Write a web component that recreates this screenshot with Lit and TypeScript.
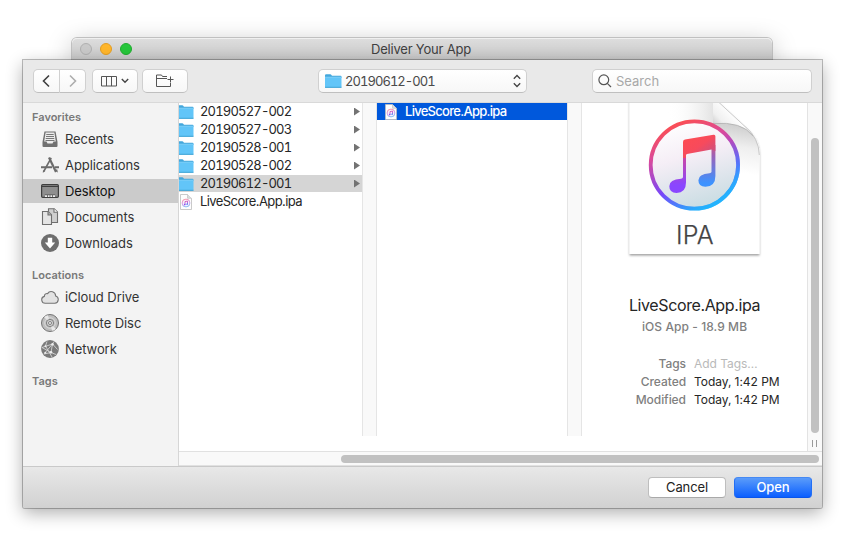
import { LitElement, html, css, svg, nothing } from "lit";
import { customElement, property } from "lit/decorators.js";
import { classMap } from "lit/directives/class-map.js";

const sidebarIcons: Record<string, unknown> = {
  recents: svg`
    <path d="M3.500 1.500h11l2 10.500v4q0 1-1 1H2.500q-1 0-1-1v-4z" fill="#707070"/>
    <path d="M4.600 2.500h8.800l1.400 9h-2.300l-1 2h-5l-1-2H3.200z" fill="#ececec"/>
    <path d="M5.300 4.500h7.400M5 6.500h8M4.700 8.500h8.600M4.500 10.500h9" stroke="#777" stroke-width="1" fill="none"/>`,
  applications: svg`
    <g fill="none" stroke="#6b6b6b">
      <path d="M8 1.500 15 16" stroke-width="2.200"/>
      <path d="M10.200 1.800 3 15" stroke-width="1.600"/>
      <path d="M0 11.300H11M14 11.300h4" stroke-width="2"/>
    </g>
    <path d="m2 14 2.300 1.200-2.500 1.600zM14 14l2.200-.8.700 3.500z" fill="#6b6b6b"/>`,
  desktop: svg`
    <rect x=".6" y="2.600" width="16.800" height="12.800" rx="1.200" fill="#8f8f8f" stroke="#3f3f3f" stroke-width="1.200"/>
    <path d="M1 4.500h16" stroke="#3f3f3f"/>
    <path d="M4 15v-2h10v2z" fill="#eee"/>
    <path d="M6.500 13v2M9 13v2M11.500 13v2M3.800 12.800h10.400" stroke="#555" stroke-width=".8"/>`,
  documents: svg`
    <g stroke="#6f6f6f" stroke-width="1.100" fill="#e4e4e4">
      <path d="M7.500.8h5.700l3.300 3.300v10.400h-9z" fill="#cfcfcf"/>
      <path d="M13 .8v3.400h3.500" fill="#fff"/>
      <path d="M1.500 3.500h5.700l3.300 3.300v9.700h-9z"/>
      <path d="M7 3.500v3.500h3.500" fill="#aaa"/>
    </g>`,
  downloads: svg`
    <circle cx="9" cy="9" r="9" fill="#6e6e6e"/>
    <path d="M6.800 3.800h4.400v4.700h3L9 14.500 3.800 8.500h3z" fill="#fff"/>`,
  icloud: svg`
    <path d="M4.300 15.300a3.500 3.500 0 0 1-.9-6.900 2.600 2.600 0 0 1 3.200-2.800 4.300 4.300 0 0 1 8 2.300 3.800 3.800 0 0 1-.8 7.400z"
      fill="#e2e2e2" stroke="#747474" stroke-width="1.100"/>`,
  disc: svg`
    <circle cx="9" cy="9" r="8.500" fill="#bdbdbd" stroke="#737373"/>
    <path d="M9 9 3 3A8.500 8.500 0 0 1 7 1.200zM9 9l6 6a8.500 8.500 0 0 1-4 1.800z" fill="#e9e9e9"/>
    <circle cx="9" cy="9" r="5.300" fill="none" stroke="#e2e2e2" stroke-width=".7"/>
    <circle cx="9" cy="9" r="3.600" fill="#d2d2d2" stroke="#777" stroke-width=".9"/>
    <circle cx="9" cy="9" r="1.500" fill="#f3f3f3" stroke="#777" stroke-width=".9"/>`,
  network: svg`
    <circle cx="9" cy="9" r="8.900" fill="#7a7a7a"/>
    <g fill="none" stroke="#d2d2d2" stroke-width=".9">
      <path d="M1 7.500 11.500 4 16.500 9.500M3 14l8.500-10M11.500 4 10 12.500l5 2M1 7.500l9 5L3 14M6 1.500 4.500 6l6.500 11M11.500 4 13 1.500"/>
    </g>
    <g fill="#eee"><circle cx="11.500" cy="4.200" r="1.200"/><circle cx="4.500" cy="6.300" r="1"/><circle cx="10" cy="12.300" r="1.300"/><circle cx="4.300" cy="12.800" r="1"/></g>`,
};

const folderIcon = html`<svg width="17" height="16" viewBox="0 0 17 16">
  <path d="M0 2.500Q0 1.300 1.200 1.300h4q.8 0 1.300.8l.4.600H15.500q1 0 1 1V5H0z" fill="#43a7dc"/>
  <path d="M0 4.300h16.500v9.700q0 .7-.7.7H.7q-.7 0-.7-.7z" fill="#62c5f8"/>
  <path d="M0 4.200h16.500" stroke="#8ad8fd" stroke-width=".8"/>
  <path d="M0 14.300h16.500" stroke="#3c9fd0" stroke-width=".9"/>
</svg>`;

const fileIcon = html`<svg width="12" height="16" viewBox="0 0 12 16">
  <defs><linearGradient id="m" gradientUnits="userSpaceOnUse" x1="5" y1="5" x2="7" y2="13"><stop stop-color="#ff5668"/><stop offset=".5" stop-color="#b25ae0"/><stop offset="1" stop-color="#2a9df4"/></linearGradient></defs>
  <path d="M.5.500h7l4 4v11H.5z" fill="#fdfdfd" stroke="#bcbcbc" stroke-width=".8"/>
  <path d="M7.500.500v3.800h4" fill="#ddd" stroke="#bbb" stroke-width=".6"/>
  <circle cx="6" cy="9" r="3.900" fill="#f8f2fb" stroke="url(#m)" stroke-width=".8" stroke-opacity=".75"/>
  <path d="M5 10.700V7.600l2.500-.5v3" fill="none" stroke="url(#m)" stroke-width=".9"/>
  <circle cx="4.700" cy="10.600" r=".8" fill="#8a4cf0"/><circle cx="7.100" cy="10.200" r=".8" fill="#3f86f5"/>
</svg>`;

@customElement("side-item")
class SideItem extends LitElement {
  @property() icon = "";
  @property() label = "";
  @property({ type: Boolean }) selected = false;
  static styles = css`
    :host { display: block; margin-bottom: 2px; }
    .item { height: 24px; display: flex; align-items: center; gap: 6px; padding-left: 18px; color: #333; letter-spacing: -.08px; }
    .selected { background: #cbcbcb; color: #111; }
    svg { flex: none; display: block; }
  `;
  render() {
    return html`<div class=${classMap({ item: true, selected: this.selected })}>
      <svg width="18" height="18" viewBox="0 0 18 18">${sidebarIcons[this.icon]}</svg><span>${this.label}</span>
    </div>`;
  }
}

@customElement("file-row")
class FileRow extends LitElement {
  @property() name = "";
  @property() kind = "folder";
  @property() tone = "";
  static styles = css`
    :host { display: block; margin-bottom: 1px; }
    .row { height: 17px; display: flex; align-items: center; color: #262626; }
    .icon { width: 21px; height: 16px; flex: none; overflow: hidden; }
    .icon svg { display: block; }
    .folder .icon svg { margin-left: -2px; }
    .file .icon svg { margin-left: 1px; }
    .name { flex: 1; line-height: 17px; white-space: nowrap; }
    .folder .name { font-variant-numeric: tabular-nums; letter-spacing: -.82px; }
    .file .name { letter-spacing: -.58px; }
    .arrow { width: 6px; height: 8px; margin-right: 2px; background: #737373; clip-path: polygon(0 0, 100% 50%, 0 100%); }
    .grey { background: #d5d5d5; }
    .blue { background: #0058dc; color: #fff; padding-left: 7px; font-weight: 500; }
    .blue .name { letter-spacing: -.72px; }
  `;
  render() {
    const folder = this.kind === "folder";
    return html`<div class=${classMap({ row: true, folder, file: !folder, grey: this.tone === "grey", blue: this.tone === "blue" })}>
      <span class="icon">${folder ? folderIcon : fileIcon}</span>
      <span class="name">${this.name}</span>
      ${folder ? html`<span class="arrow"></span>` : nothing}
    </div>`;
  }
}

@customElement("file-preview")
class FilePreview extends LitElement {
  static styles = css`
    :host { display: block; width: 225px; overflow: hidden; }
    .art { display: block; }
    .title { margin-top: 31px; height: 23px; line-height: 22px; font-size: 16px; letter-spacing: -.38px; text-align: center; color: #262626; }
    .sub { height: 20px; line-height: 20px; font-size: 12px; font-weight: 500; color: #808080; text-align: center; letter-spacing: .08px; }
    .facts { margin-top: 18px; display: grid; grid-template-columns: 104px 1fr; column-gap: 8px; grid-auto-rows: 18px; line-height: 18px; font-size: 12px; color: #262626; letter-spacing: -.05px; white-space: nowrap; }
    .key { text-align: right; color: #808080; font-weight: 500; }
    .hint { color: #b9b9b9; }
  `;
  render() {
    return html`
      <svg class="art" width="225" height="160" viewBox="582 103 225 160">
        <defs>
          <linearGradient id="ring" x1=".25" y1="0" x2=".65" y2="1">
            <stop offset="0" stop-color="#ff4f4b"/><stop offset=".3" stop-color="#d94a9c"/><stop offset=".68" stop-color="#7747fa"/><stop offset="1" stop-color="#20b6fc"/>
          </linearGradient>
          <linearGradient id="ringBlue" x1="0" y1=".5" x2="1" y2=".55">
            <stop offset=".35" stop-color="#20b6fc" stop-opacity="0"/><stop offset="1" stop-color="#22b4ff"/>
          </linearGradient>
          <linearGradient id="fadeDown" x1="0" y1="0" x2="0" y2="1">
            <stop offset=".25" stop-color="#000"/><stop offset=".8" stop-color="#fff"/>
          </linearGradient>
          <mask id="lower" maskUnits="userSpaceOnUse" x="640" y="115" width="110" height="100"><rect x="640" y="115" width="110" height="100" fill="url(#fadeDown)"/></mask>
          <linearGradient id="disc" x1=".3" y1="0" x2=".6" y2="1">
            <stop offset="0" stop-color="#fff"/><stop offset=".4" stop-color="#f5eef6"/><stop offset="1" stop-color="#c8dce2"/>
          </linearGradient>
          <linearGradient id="left" gradientUnits="userSpaceOnUse" x1="0" y1="140" x2="0" y2="185"><stop stop-color="#ff4a55"/><stop offset=".35" stop-color="#cf479f"/><stop offset="1" stop-color="#8a46ff"/></linearGradient>
          <linearGradient id="right" gradientUnits="userSpaceOnUse" x1="0" y1="138" x2="0" y2="183"><stop stop-color="#fa4f5d"/><stop offset=".4" stop-color="#9b62b8"/><stop offset="1" stop-color="#3d93ff"/></linearGradient>
          <linearGradient id="beam" x1="0" y1="0" x2="1" y2="1"><stop stop-color="#ff4c50"/><stop offset=".5" stop-color="#f74a5c"/><stop offset="1" stop-color="#b8538f"/></linearGradient>
          <linearGradient id="shade" x1="0" y1="0" x2="1" y2="0"><stop offset=".45" stop-color="#fff" stop-opacity="0"/><stop offset="1" stop-color="#dadada"/></linearGradient>
          <linearGradient id="curl" gradientUnits="userSpaceOnUse" x1="714" y1="126" x2="731" y2="110"><stop stop-color="#cdcdcd"/><stop offset=".4" stop-color="#f0f0f0"/><stop offset="1" stop-color="#fff"/></linearGradient>
          <linearGradient id="under" gradientUnits="userSpaceOnUse" x1="742" y1="126" x2="735" y2="172"><stop stop-color="#cfcfcf"/><stop offset=".45" stop-color="#efefef"/><stop offset="1" stop-color="#fff"/></linearGradient>
          <filter id="soft" x="-10%" y="-10%" width="120%" height="120%"><feDropShadow dx="0" dy="1.500" stdDeviation="1.300" flood-opacity=".38"/></filter>
        </defs>
        <path d="M629.500 90H706L745 126.500Q759.500 138 759.500 153V254H629.500z" fill="#fff" filter="url(#soft)"/>
        <path d="M630 103h83v32h-83z" fill="url(#shade)" opacity=".75"/>
        <path d="M713 123q28-2 34 5 12 10 12 28V175H713z" fill="url(#under)"/>
        <path d="M713 90V123.600Q742 121 752 135Q750 131 745 126.500L719 102.500V90z" fill="url(#curl)"/>
        <path d="M713 123.600Q742 121 753 136" fill="none" stroke="#a9a9a9" stroke-width=".7"/>
        <path d="M719 102.500 745 126.500Q759 138 759.300 155" fill="none" stroke="#bcbcbc" stroke-width=".8"/>
        <circle cx="694.400" cy="165" r="43.700" fill="url(#disc)"/>
        <circle cx="694.400" cy="165" r="43.700" fill="none" stroke="url(#ring)" stroke-width="3.800"/>
        <circle cx="694.400" cy="165" r="43.700" fill="none" stroke="url(#ringBlue)" stroke-width="3.800" mask="url(#lower)"/>
        <path d="M683 150v27.200q-.3 1.400-2 1.600-11.700.6-11.700 7.500 0 6.600 7.200 6.600 9.500 0 9.500-10.400V150z" fill="url(#left)"/>
        <path d="M711.500 145v27q-.2 1-2 1.300-11.100.8-11.100 7 0 6.500 7 6.500 10-.2 10-10.800V145z" fill="url(#right)"/>
        <path d="M683 158V142q0-2 2-2.400l28.500-4.900q1.900-.3 1.900 1.500V151l-3.900-1.500-24.500 4.400q-1 .2-1 1.400V158z" fill="url(#beam)"/>
        <text x="694.800" y="244" font-size="25" font-weight="300" text-anchor="middle" fill="#444" stroke="#444" stroke-width=".25" textLength="37.500">IPA</text>
      </svg>
      <div class="title">LiveScore.App.ipa</div>
      <div class="sub">iOS App - 18.9 MB</div>
      <div class="facts">
        <span class="key">Tags</span><span class="hint">Add Tags…</span>
        <span class="key">Created</span><span>Today, 1:42 PM</span>
        <span class="key">Modified</span><span>Today, 1:42 PM</span>
      </div>`;
  }
}

@customElement("app-root")
class AppRoot extends LitElement {
  static styles = css`
    :host { display: block; width: 845px; height: 535px; overflow: hidden; background: #fff; font: 13px/16px Inter, "Liberation Sans", sans-serif; color: #333; box-sizing: border-box; padding: 38px 22px 0; }
    * { box-sizing: border-box; }
    svg { display: block; }
    .window { height: 22px; margin: 0 51px 0 50px; border-radius: 5px 5px 0 0; background: linear-gradient(#dedede, #c7c7c7); box-shadow: 0 0 0 1px #c0c0c0, inset 0 1px #f0f0f0, 0 6px 26px rgba(0,0,0,.28); display: grid; grid-template-columns: 1fr auto 1fr; align-items: center; padding: 0 10px 0 8px; color: #404040; letter-spacing: -.2px; }
    .lights { display: flex; gap: 8px; }
    .light { width: 12px; height: 12px; border-radius: 50%; border: 1px solid #b0b0b0; background: #c9c9c9; }
    .light.min { background: #ffb62b; border-color: #e39d22; }
    .light.max { background: #26c63b; border-color: #1fac2e; }
    .dialog { position: relative; width: 799px; height: 448px; margin-left: 1px; display: flex; flex-direction: column; border-radius: 0 0 2px 2px; background: #e9e9e9; box-shadow: 0 0 0 1px rgba(0,0,0,.25), 0 5px 17px rgba(0,0,0,.32); }
    .toolbar { height: 43px; flex: none; display: flex; align-items: flex-start; padding: 9px 10px 0; border-bottom: 1px solid #d9d9d9; }
    .control { height: 24px; border: 1px solid #d0d0d0; border-bottom-color: #bfbfbf; border-radius: 5px; background: linear-gradient(#fff, #f7f7f7); display: flex; align-items: center; justify-content: center; }
    .back { width: 27px; border-radius: 5px 0 0 5px; padding-right: 1px; }
    .next { width: 26px; border-left: 0; border-radius: 0 5px 5px 0; margin-right: 6px; }
    .view { width: 46px; margin-right: 4px; gap: 3px; padding-right: 1px; }
    .new { width: 46px; margin-right: 130px; }
    .new svg { margin-top: -1px; }
    .path { width: 209px; margin-right: 65px; justify-content: flex-start; padding: 0 5px 0 6px; gap: 3px; font-size: 13px; color: #4a4a4a; }
    .path span { flex: 1; font-variant-numeric: tabular-nums; letter-spacing: -.98px; }
    .path span { letter-spacing: -.95px; }
    .search { width: 220px; justify-content: flex-start; padding-left: 5px; gap: 4px; color: #a8a8a8; }
    .body { flex: 1; display: flex; min-height: 0; }
    .side { width: 156px; background: #f3f3f3; border-right: 1px solid #d6d6d6; }
    .heading { height: 24px; line-height: 28px; padding-left: 9px; font-size: 11px; font-weight: 600; color: #797979; }
    .later { margin-top: 6px; }
    .browser { flex: 1; display: flex; flex-direction: column; background: #fff; }
    .panes { display: flex; height: 348px; }
    .col { height: 333px; overflow: hidden; }
    .first { width: 183px; }
    .second { width: 190px; }
    .gutter { width: 15px; height: 333px; background: #f9f9f9; border: solid #e5e5e5; border-width: 0 1px; }
    .vbar { width: 15px; border-left: 1px solid #e3e3e3; background: #f9f9f9; display: flex; flex-direction: column; align-items: center; padding: 35px 0 0; }
    .vthumb { width: 8px; height: 295px; border-radius: 4px; background: #c1c1c1; }
    .grip { width: 5px; height: 7px; margin: 7px 1px 0 0; border: solid #999; border-width: 0 1px; }
    .hbar { height: 15px; background: #f9f9f9; border: solid #e1e1e1; border-width: 1px 0; display: flex; align-items: center; justify-content: flex-end; padding-right: 3px; }
    .hthumb { width: 478px; height: 8px; border-radius: 4px; background: #c1c1c1; }
    .footer { height: 42px; flex: none; border-top: 1px solid #c9c9c9; border-radius: 0 0 2px 2px; background: linear-gradient(#e8e8e8, #d1d1d1); display: flex; justify-content: flex-end; gap: 8px; padding: 10px 10px 0 0; }
    .button { width: 78px; height: 21px; border-radius: 4px; border: 1px solid #bebebe; border-bottom-color: #a9a9a9; background: #fff; text-align: center; line-height: 19px; color: #222; letter-spacing: -.1px; }
    .open { color: #fff; font-weight: 500; background: linear-gradient(#5b9cfa, #0b5fff); border-color: #4689f3 #236ff5 #0a55ea; }
  `;
  render() {
    return html`
      <div class="window">
        <div class="lights"><span class="light"></span><span class="light min"></span><span class="light max"></span></div>
        <span>Deliver Your App</span>
      </div>
      <div class="dialog">
        <div class="toolbar">
          <div class="control back"><svg width="8" height="14" viewBox="0 0 8 14" fill="none" stroke="#3f3f3f" stroke-width="1.600"><path d="M7 1.500 1.500 7 7 12.500"/></svg></div>
          <div class="control next"><svg width="8" height="14" viewBox="0 0 8 14" fill="none" stroke="#adadad" stroke-width="1.600"><path d="M1 1.500 6.500 7 1 12.500"/></svg></div>
          <div class="control view">
            <svg width="17" height="11" viewBox="0 0 17 11" fill="none" stroke="#555"><path d="M.5.500h15v9.500H.5zM5.500.500V10M10.500.500V10"/></svg>
            <svg width="8" height="6" viewBox="0 0 8 6" fill="none" stroke="#444" stroke-width="1.400"><path d="M.8 1 4 4.200 7.200 1"/></svg>
          </div>
          <div class="control new"><svg width="18" height="14" viewBox="0 0 18 14" fill="none" stroke="#555"><path d="M11 2.500H6.500L5.500 1H.5v11.500h14V9M.5 4.500H11M14.500 2.500v6M11.500 5.500h6"/></svg></div>
          <div class="control path">${folderIcon}<span>20190612-001</span>
            <svg width="8" height="14" viewBox="0 0 8 14" fill="none" stroke="#444" stroke-width="1.300"><path d="M.8 4.800 4 1.500l3.200 3.300M.8 9.200 4 12.500l3.200-3.300"/></svg>
          </div>
          <div class="control search"><svg width="14" height="14" viewBox="0 0 14 14" fill="none" stroke="#555" stroke-width="1.200"><circle cx="5.800" cy="5.800" r="4.900"/><path d="M9.300 9.300 13 13"/></svg><span>Search</span></div>
        </div>
        <div class="body">
          <div class="side">
            <div class="heading">Favorites</div>
            <side-item icon="recents" label="Recents"></side-item>
            <side-item icon="applications" label="Applications"></side-item>
            <side-item icon="desktop" label="Desktop" selected></side-item>
            <side-item icon="documents" label="Documents"></side-item>
            <side-item icon="downloads" label="Downloads"></side-item>
            <div class="heading later">Locations</div>
            <side-item icon="icloud" label="iCloud Drive"></side-item>
            <side-item icon="disc" label="Remote Disc"></side-item>
            <side-item icon="network" label="Network"></side-item>
            <div class="heading later">Tags</div>
          </div>
          <div class="browser">
            <div class="panes">
              <div class="col first">
                ${["20190527-002", "20190527-003", "20190528-001", "20190528-002"].map((n) => html`<file-row name=${n}></file-row>`)}
                <file-row name="20190612-001" tone="grey"></file-row>
                <file-row name="LiveScore.App.ipa" kind="file"></file-row>
              </div>
              <div class="gutter"></div>
              <div class="col second"><file-row name="LiveScore.App.ipa" kind="file" tone="blue"></file-row></div>
              <div class="gutter"></div>
              <file-preview></file-preview>
              <div class="vbar"><div class="vthumb"></div><div class="grip"></div></div>
            </div>
            <div class="hbar"><div class="hthumb"></div></div>
          </div>
        </div>
        <div class="footer"><div class="button">Cancel</div><div class="button open">Open</div></div>
      </div>`;
  }
}
